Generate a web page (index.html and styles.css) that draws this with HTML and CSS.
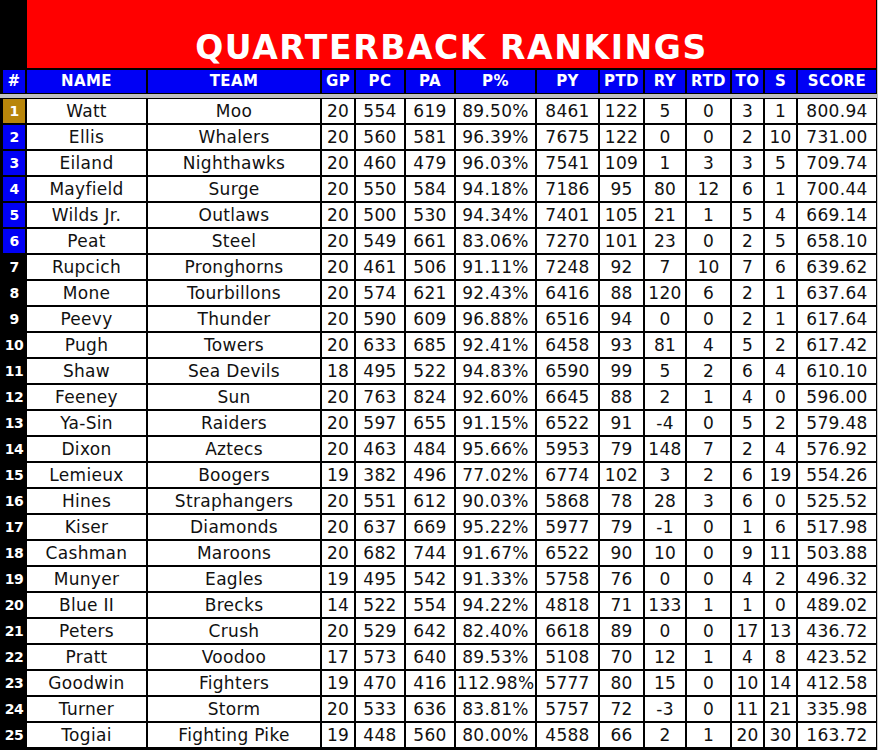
FILE: index.html
```html
<!DOCTYPE html>
<html>
<head>
<meta charset="utf-8">
<link rel="stylesheet" href="styles.css">
</head>
<body>
<div class="sheet">
  <div class="top">
    <div class="corner"></div>
    <div class="title">QUARTERBACK RANKINGS</div>
  </div>
  <div class="row head">
    <div class="h">#</div><div class="h">NAME</div><div class="h">TEAM</div><div class="h">GP</div><div class="h">PC</div><div class="h">PA</div><div class="h">P%</div><div class="h">PY</div><div class="h">PTD</div><div class="h">RY</div><div class="h">RTD</div><div class="h">TO</div><div class="h">S</div><div class="h">SCORE</div>
  </div>
  <div class="divider"></div>
  <div class="body">
    <div class="row"><div class="rk gold">1</div><div class="c">Watt</div><div class="c">Moo</div><div class="c">20</div><div class="c">554</div><div class="c">619</div><div class="c">89.50%</div><div class="c">8461</div><div class="c">122</div><div class="c">5</div><div class="c">0</div><div class="c">3</div><div class="c">1</div><div class="c">800.94</div></div>
    <div class="row"><div class="rk blue">2</div><div class="c">Ellis</div><div class="c">Whalers</div><div class="c">20</div><div class="c">560</div><div class="c">581</div><div class="c">96.39%</div><div class="c">7675</div><div class="c">122</div><div class="c">0</div><div class="c">0</div><div class="c">2</div><div class="c">10</div><div class="c">731.00</div></div>
    <div class="row"><div class="rk blue">3</div><div class="c">Eiland</div><div class="c">Nighthawks</div><div class="c">20</div><div class="c">460</div><div class="c">479</div><div class="c">96.03%</div><div class="c">7541</div><div class="c">109</div><div class="c">1</div><div class="c">3</div><div class="c">3</div><div class="c">5</div><div class="c">709.74</div></div>
    <div class="row"><div class="rk blue">4</div><div class="c">Mayfield</div><div class="c">Surge</div><div class="c">20</div><div class="c">550</div><div class="c">584</div><div class="c">94.18%</div><div class="c">7186</div><div class="c">95</div><div class="c">80</div><div class="c">12</div><div class="c">6</div><div class="c">1</div><div class="c">700.44</div></div>
    <div class="row"><div class="rk blue">5</div><div class="c">Wilds Jr.</div><div class="c">Outlaws</div><div class="c">20</div><div class="c">500</div><div class="c">530</div><div class="c">94.34%</div><div class="c">7401</div><div class="c">105</div><div class="c">21</div><div class="c">1</div><div class="c">5</div><div class="c">4</div><div class="c">669.14</div></div>
    <div class="row"><div class="rk blue">6</div><div class="c">Peat</div><div class="c">Steel</div><div class="c">20</div><div class="c">549</div><div class="c">661</div><div class="c">83.06%</div><div class="c">7270</div><div class="c">101</div><div class="c">23</div><div class="c">0</div><div class="c">2</div><div class="c">5</div><div class="c">658.10</div></div>
    <div class="row"><div class="rk">7</div><div class="c">Rupcich</div><div class="c">Pronghorns</div><div class="c">20</div><div class="c">461</div><div class="c">506</div><div class="c">91.11%</div><div class="c">7248</div><div class="c">92</div><div class="c">7</div><div class="c">10</div><div class="c">7</div><div class="c">6</div><div class="c">639.62</div></div>
    <div class="row"><div class="rk">8</div><div class="c">Mone</div><div class="c">Tourbillons</div><div class="c">20</div><div class="c">574</div><div class="c">621</div><div class="c">92.43%</div><div class="c">6416</div><div class="c">88</div><div class="c">120</div><div class="c">6</div><div class="c">2</div><div class="c">1</div><div class="c">637.64</div></div>
    <div class="row"><div class="rk">9</div><div class="c">Peevy</div><div class="c">Thunder</div><div class="c">20</div><div class="c">590</div><div class="c">609</div><div class="c">96.88%</div><div class="c">6516</div><div class="c">94</div><div class="c">0</div><div class="c">0</div><div class="c">2</div><div class="c">1</div><div class="c">617.64</div></div>
    <div class="row"><div class="rk">10</div><div class="c">Pugh</div><div class="c">Towers</div><div class="c">20</div><div class="c">633</div><div class="c">685</div><div class="c">92.41%</div><div class="c">6458</div><div class="c">93</div><div class="c">81</div><div class="c">4</div><div class="c">5</div><div class="c">2</div><div class="c">617.42</div></div>
    <div class="row"><div class="rk">11</div><div class="c">Shaw</div><div class="c">Sea Devils</div><div class="c">18</div><div class="c">495</div><div class="c">522</div><div class="c">94.83%</div><div class="c">6590</div><div class="c">99</div><div class="c">5</div><div class="c">2</div><div class="c">6</div><div class="c">4</div><div class="c">610.10</div></div>
    <div class="row"><div class="rk">12</div><div class="c">Feeney</div><div class="c">Sun</div><div class="c">20</div><div class="c">763</div><div class="c">824</div><div class="c">92.60%</div><div class="c">6645</div><div class="c">88</div><div class="c">2</div><div class="c">1</div><div class="c">4</div><div class="c">0</div><div class="c">596.00</div></div>
    <div class="row"><div class="rk">13</div><div class="c">Ya-Sin</div><div class="c">Raiders</div><div class="c">20</div><div class="c">597</div><div class="c">655</div><div class="c">91.15%</div><div class="c">6522</div><div class="c">91</div><div class="c">-4</div><div class="c">0</div><div class="c">5</div><div class="c">2</div><div class="c">579.48</div></div>
    <div class="row"><div class="rk">14</div><div class="c">Dixon</div><div class="c">Aztecs</div><div class="c">20</div><div class="c">463</div><div class="c">484</div><div class="c">95.66%</div><div class="c">5953</div><div class="c">79</div><div class="c">148</div><div class="c">7</div><div class="c">2</div><div class="c">4</div><div class="c">576.92</div></div>
    <div class="row"><div class="rk">15</div><div class="c">Lemieux</div><div class="c">Boogers</div><div class="c">19</div><div class="c">382</div><div class="c">496</div><div class="c">77.02%</div><div class="c">6774</div><div class="c">102</div><div class="c">3</div><div class="c">2</div><div class="c">6</div><div class="c">19</div><div class="c">554.26</div></div>
    <div class="row"><div class="rk">16</div><div class="c">Hines</div><div class="c">Straphangers</div><div class="c">20</div><div class="c">551</div><div class="c">612</div><div class="c">90.03%</div><div class="c">5868</div><div class="c">78</div><div class="c">28</div><div class="c">3</div><div class="c">6</div><div class="c">0</div><div class="c">525.52</div></div>
    <div class="row"><div class="rk">17</div><div class="c">Kiser</div><div class="c">Diamonds</div><div class="c">20</div><div class="c">637</div><div class="c">669</div><div class="c">95.22%</div><div class="c">5977</div><div class="c">79</div><div class="c">-1</div><div class="c">0</div><div class="c">1</div><div class="c">6</div><div class="c">517.98</div></div>
    <div class="row"><div class="rk">18</div><div class="c">Cashman</div><div class="c">Maroons</div><div class="c">20</div><div class="c">682</div><div class="c">744</div><div class="c">91.67%</div><div class="c">6522</div><div class="c">90</div><div class="c">10</div><div class="c">0</div><div class="c">9</div><div class="c">11</div><div class="c">503.88</div></div>
    <div class="row"><div class="rk">19</div><div class="c">Munyer</div><div class="c">Eagles</div><div class="c">19</div><div class="c">495</div><div class="c">542</div><div class="c">91.33%</div><div class="c">5758</div><div class="c">76</div><div class="c">0</div><div class="c">0</div><div class="c">4</div><div class="c">2</div><div class="c">496.32</div></div>
    <div class="row"><div class="rk">20</div><div class="c">Blue II</div><div class="c">Brecks</div><div class="c">14</div><div class="c">522</div><div class="c">554</div><div class="c">94.22%</div><div class="c">4818</div><div class="c">71</div><div class="c">133</div><div class="c">1</div><div class="c">1</div><div class="c">0</div><div class="c">489.02</div></div>
    <div class="row"><div class="rk">21</div><div class="c">Peters</div><div class="c">Crush</div><div class="c">20</div><div class="c">529</div><div class="c">642</div><div class="c">82.40%</div><div class="c">6618</div><div class="c">89</div><div class="c">0</div><div class="c">0</div><div class="c">17</div><div class="c">13</div><div class="c">436.72</div></div>
    <div class="row"><div class="rk">22</div><div class="c">Pratt</div><div class="c">Voodoo</div><div class="c">17</div><div class="c">573</div><div class="c">640</div><div class="c">89.53%</div><div class="c">5108</div><div class="c">70</div><div class="c">12</div><div class="c">1</div><div class="c">4</div><div class="c">8</div><div class="c">423.52</div></div>
    <div class="row"><div class="rk">23</div><div class="c">Goodwin</div><div class="c">Fighters</div><div class="c">19</div><div class="c">470</div><div class="c">416</div><div class="c">112.98%</div><div class="c">5777</div><div class="c">80</div><div class="c">15</div><div class="c">0</div><div class="c">10</div><div class="c">14</div><div class="c">412.58</div></div>
    <div class="row"><div class="rk">24</div><div class="c">Turner</div><div class="c">Storm</div><div class="c">20</div><div class="c">533</div><div class="c">636</div><div class="c">83.81%</div><div class="c">5757</div><div class="c">72</div><div class="c">-3</div><div class="c">0</div><div class="c">11</div><div class="c">21</div><div class="c">335.98</div></div>
    <div class="row"><div class="rk">25</div><div class="c">Togiai</div><div class="c">Fighting Pike</div><div class="c">19</div><div class="c">448</div><div class="c">560</div><div class="c">80.00%</div><div class="c">4588</div><div class="c">66</div><div class="c">2</div><div class="c">1</div><div class="c">20</div><div class="c">30</div><div class="c">163.72</div></div>
  </div>
</div>
</body>
</html>
```
FILE: styles.css
```css
:root {
  --cols: 22px 119px 172px 32px 48px 48px 79px 61px 43px 40px 43px 31px 31px 78px;
}
html, body {
  margin: 0;
  padding: 0;
  background: #000;
}
body {
  width: 878px;
  height: 750px;
  overflow: hidden;
  font-family: "DejaVu Sans", sans-serif;
}
.sheet {
  width: 878px;
  height: 750px;
  background: #000;
  box-shadow: inset -1px 0 0 #c8c8c8;
}
.top {
  display: grid;
  grid-template-columns: 27px 849px;
  height: 68px;
  margin-bottom: 2px;
}
.corner {
  background: #000;
}
.title {
  background: #ff0000;
  color: #fff;
  font-weight: bold;
  font-size: 33px;
  line-height: 33px;
  letter-spacing: 1.6px;
  text-align: center;
  padding-top: 31px;
  box-sizing: border-box;
  white-space: nowrap;
}
.row {
  display: grid;
  grid-template-columns: var(--cols);
  column-gap: 2px;
  padding-left: 3px;
  height: 24px;
}
.head {
  height: 23px;
}
.h {
  background: #0000f5;
  color: #fff;
  font-weight: bold;
  font-size: 15px;
  letter-spacing: 0.4px;
  line-height: 23px;
  text-align: center;
  white-space: nowrap;
}
.divider {
  margin-top: 1px;
  height: 4px;
  background: #c0c0c0;
}
.body {
  display: flex;
  flex-direction: column;
  row-gap: 2px;
  padding-top: 1px;
}
.c {
  background: #fff;
  color: #111;
  font-size: 17px;
  letter-spacing: 0.3px;
  line-height: 24px;
  text-align: center;
  white-space: nowrap;
  overflow: visible;
}
.rk {
  background: #000;
  color: #fff;
  font-weight: bold;
  font-size: 14px;
  line-height: 24px;
  text-align: center;
  white-space: nowrap;
  letter-spacing: -0.6px;
}
.rk.gold {
  background: #b8860b;
}
.rk.blue {
  background: #0000f5;
}
```
